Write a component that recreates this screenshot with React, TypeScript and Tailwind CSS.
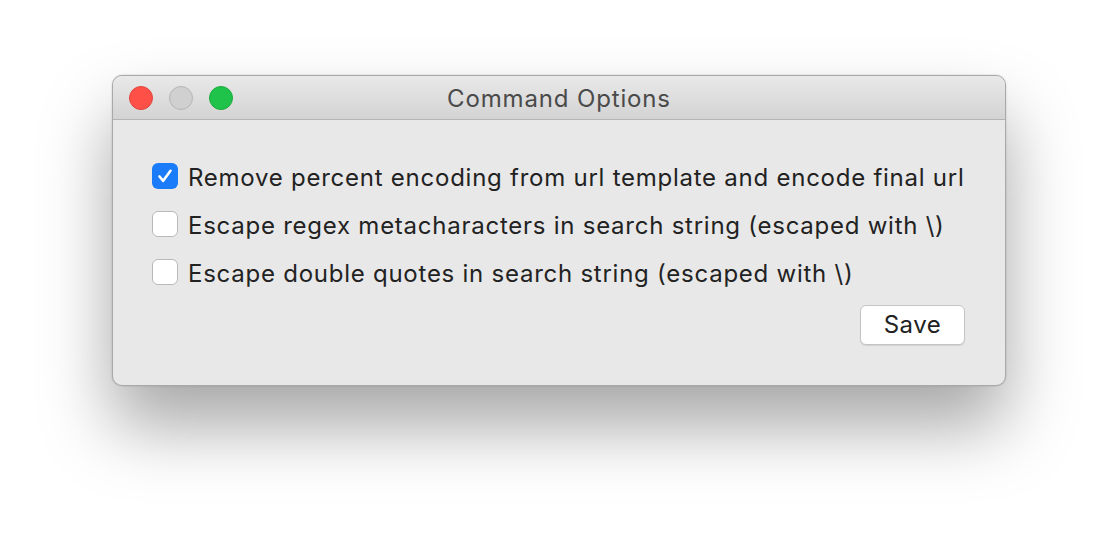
import React from 'react';

const options = [
  { label: 'Remove percent encoding from url template and encode final url', checked: true },
  { label: 'Escape regex metacharacters in search string (escaped with \\)', checked: false },
  { label: 'Escape double quotes in search string (escaped with \\)', checked: false },
];

const Checkbox: React.FC<{ checked: boolean }> = ({ checked }) =>
  checked ? (
    <div className="w-[26px] h-[26px] rounded-[6px] bg-[#1a7cf9] flex items-center justify-center shrink-0">
      <svg width="18" height="18" viewBox="0 0 18 18" fill="none">
        <path d="M3.5 9.5 L7.2 13.8 L14.5 3.8" stroke="white" strokeWidth={2.6} strokeLinecap="round" strokeLinejoin="round" />
      </svg>
    </div>
  ) : (
    <div className="w-[26px] h-[26px] rounded-[6px] bg-white border border-[#b9b9b9] shrink-0" />
  );

export default function App() {
  return (
    <div className="w-[1118px] h-[534px] bg-white flex justify-center pt-[75px]" style={{ fontFamily: 'Inter, "Liberation Sans", Arial, sans-serif' }}>
      <div className="w-[894px] h-[311px] rounded-[10px] bg-[#e8e8e8] border border-[#a9a9a9] shadow-[0_40px_70px_rgba(0,0,0,0.35),0_0_2px_rgba(0,0,0,0.2)] overflow-hidden flex flex-col">
        <div className="h-[44px] bg-gradient-to-b from-[#e9e9e9] to-[#d3d3d3] border-b border-[#b4b4b4] flex items-center relative shrink-0">
          <div className="flex gap-[16px] pl-[16px]">
            <div className="w-[24px] h-[24px] rounded-full bg-[#fe5047] border border-[#e0443e]" />
            <div className="w-[24px] h-[24px] rounded-full bg-[#d0d0d0] border border-[#b5b5b5]" />
            <div className="w-[24px] h-[24px] rounded-full bg-[#1fc34a] border border-[#1aab3b]" />
          </div>
          <div className="absolute inset-0 flex items-center justify-center pt-[2px] text-[24px] tracking-[0.85px] text-[#4a4a4a] pointer-events-none">
            Command Options
          </div>
        </div>
        <div className="flex-1 flex flex-col pl-[39px] pr-[40px] pt-[43px]">
          <div className="flex flex-col gap-[22px]">
            {options.map((o) => (
              <div key={o.label} className="flex items-center gap-[10px] h-[26px]">
                <Checkbox checked={o.checked} />
                <span className="text-[24px] tracking-[0.75px] text-[#222] leading-none mt-[3px]">{o.label}</span>
              </div>
            ))}
          </div>
          <div className="flex justify-end mt-[20px]">
            <button className="w-[105px] h-[40px] bg-white rounded-[6px] border border-[#c4c4c4] shadow-[0_1px_1px_rgba(0,0,0,0.1)] text-[24px] tracking-[0.5px] text-[#222]">
              Save
            </button>
          </div>
        </div>
      </div>
    </div>
  );
}
